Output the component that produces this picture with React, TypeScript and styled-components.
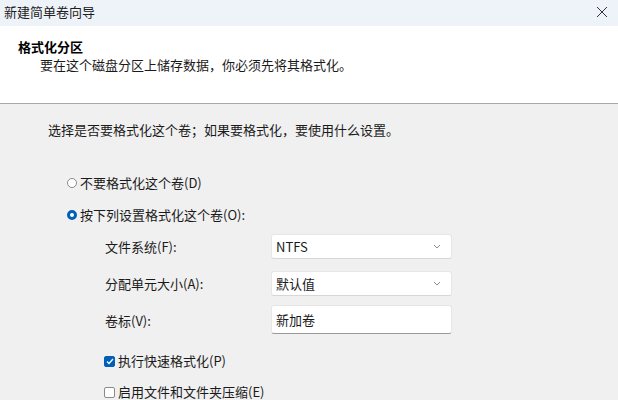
import styled, { createGlobalStyle } from "styled-components";

const GlobalStyle = createGlobalStyle`
  html, body {
    margin: 0;
    padding: 0;
    background: #f0f0f0;
  }
  body {
    font-family: "Noto Sans CJK SC", "Noto Sans", sans-serif;
    font-size: 13px;
    color: #1a1a1a;
  }
`;

const Window = styled.div`
  width: 618px;
  height: 400px;
  overflow: hidden;
  display: flex;
  flex-direction: column;
  background: #f0f0f0;
`;

const TitleBar = styled.div`
  height: 26px;
  flex: none;
  display: flex;
  align-items: center;
  justify-content: space-between;
  padding: 0 6px 0 4px;
  background: #eef3f9;
`;

const TitleText = styled.span`
  font-size: 13px;
  line-height: 18px;
  margin-top: -2px;
  color: #202020;
`;

const CloseButton = styled.div`
  width: 20px;
  height: 20px;
  display: flex;
  align-items: center;
  justify-content: center;
  margin-top: -2px;
`;

const Header = styled.div`
  height: 78px;
  flex: none;
  box-sizing: border-box;
  padding-top: 12px;
  background: #ffffff;
  border-bottom: 1px solid #a8a8a8;
`;

const HeaderTitle = styled.div`
  padding-left: 18px;
  font-weight: bold;
  line-height: 18px;
  color: #000;
`;

const HeaderSub = styled.div`
  padding-left: 40px;
  line-height: 18px;
  color: #1a1a1a;
`;

const Body = styled.div`
  padding: 17px 0 0 48px;
  display: flex;
  flex-direction: column;
`;

const Prompt = styled.div`
  line-height: 18px;
`;

const OptionRow = styled.label<{ $top: number; $indent: number }>`
  display: flex;
  align-items: center;
  gap: 3px;
  height: 18px;
  line-height: 18px;
  margin-top: ${(p) => p.$top}px;
  margin-left: ${(p) => p.$indent}px;
`;

const Radio = styled.span<{ $checked?: boolean }>`
  box-sizing: border-box;
  width: 10px;
  height: 10px;
  border-radius: 50%;
  background: #fff;
  border: ${(p) => (p.$checked ? "3px solid #005fb8" : "1px solid #8a8a8a")};
`;

const Check = styled.span<{ $checked?: boolean }>`
  box-sizing: border-box;
  width: 11px;
  height: 11px;
  border-radius: 2px;
  display: flex;
  align-items: center;
  justify-content: center;
  background: ${(p) => (p.$checked ? "#005fb8" : "#fff")};
  border: 1px solid ${(p) => (p.$checked ? "#005fb8" : "#8a8a8a")};
`;

const Form = styled.div`
  margin: 10px 0 0 57px;
  display: grid;
  grid-template-columns: 166px 181px;
  grid-auto-rows: auto;
  row-gap: 12px;
  align-items: center;
`;

const FieldLabel = styled.div`
  line-height: 18px;
`;

const Field = styled.div<{ $tall?: boolean }>`
  box-sizing: border-box;
  height: ${(p) => (p.$tall ? 29 : 25)}px;
  display: flex;
  align-items: center;
  justify-content: space-between;
  padding: 0 10px 0 4px;
  background: #fff;
  border: 1px solid #e6e6e6;
  border-bottom: 1px solid ${(p) => (p.$tall ? "#9a9a9a" : "#d6d6d6")};
  border-radius: 3px;
  margin-top: ${(p) => (p.$tall ? -3 : 0)}px;
`;

const FieldValue = styled.span`
  color: #1a1a1a;
  line-height: 18px;
`;

function Chevron() {
  return (
    <svg width="8" height="5" viewBox="0 0 8 5">
      <path d="M1 1 L4 4 L7 1" stroke="#8a8a8a" strokeWidth="1" fill="none" />
    </svg>
  );
}

export default function App() {
  return (
    <Window>
      <GlobalStyle />
      <TitleBar>
        <TitleText>新建简单卷向导</TitleText>
        <CloseButton>
          <svg width="12" height="12" viewBox="0 0 12 12">
            <path d="M1 1 L11 11 M11 1 L1 11" stroke="#333" strokeWidth="1" />
          </svg>
        </CloseButton>
      </TitleBar>
      <Header>
        <HeaderTitle>格式化分区</HeaderTitle>
        <HeaderSub>要在这个磁盘分区上储存数据，你必须先将其格式化。</HeaderSub>
      </Header>
      <Body>
        <Prompt>选择是否要格式化这个卷；如果要格式化，要使用什么设置。</Prompt>
        <OptionRow $top={35} $indent={19}>
          <Radio />
          不要格式化这个卷(D)
        </OptionRow>
        <OptionRow $top={14} $indent={19}>
          <Radio $checked />
          按下列设置格式化这个卷(O):
        </OptionRow>
        <Form>
          <FieldLabel>文件系统(F):</FieldLabel>
          <Field>
            <FieldValue>NTFS</FieldValue>
            <Chevron />
          </Field>
          <FieldLabel>分配单元大小(A):</FieldLabel>
          <Field>
            <FieldValue>默认值</FieldValue>
            <Chevron />
          </Field>
          <FieldLabel>卷标(V):</FieldLabel>
          <Field $tall>
            <FieldValue>新加卷</FieldValue>
          </Field>
        </Form>
        <OptionRow $top={18} $indent={56}>
          <Check $checked>
            <svg width="8" height="7" viewBox="0 0 8 7">
              <path d="M1 3.5 L3 5.5 L7 1" stroke="#fff" strokeWidth="1.3" fill="none" />
            </svg>
          </Check>
          执行快速格式化(P)
        </OptionRow>
        <OptionRow $top={13} $indent={56}>
          <Check />
          启用文件和文件夹压缩(E)
        </OptionRow>
      </Body>
    </Window>
  );
}
